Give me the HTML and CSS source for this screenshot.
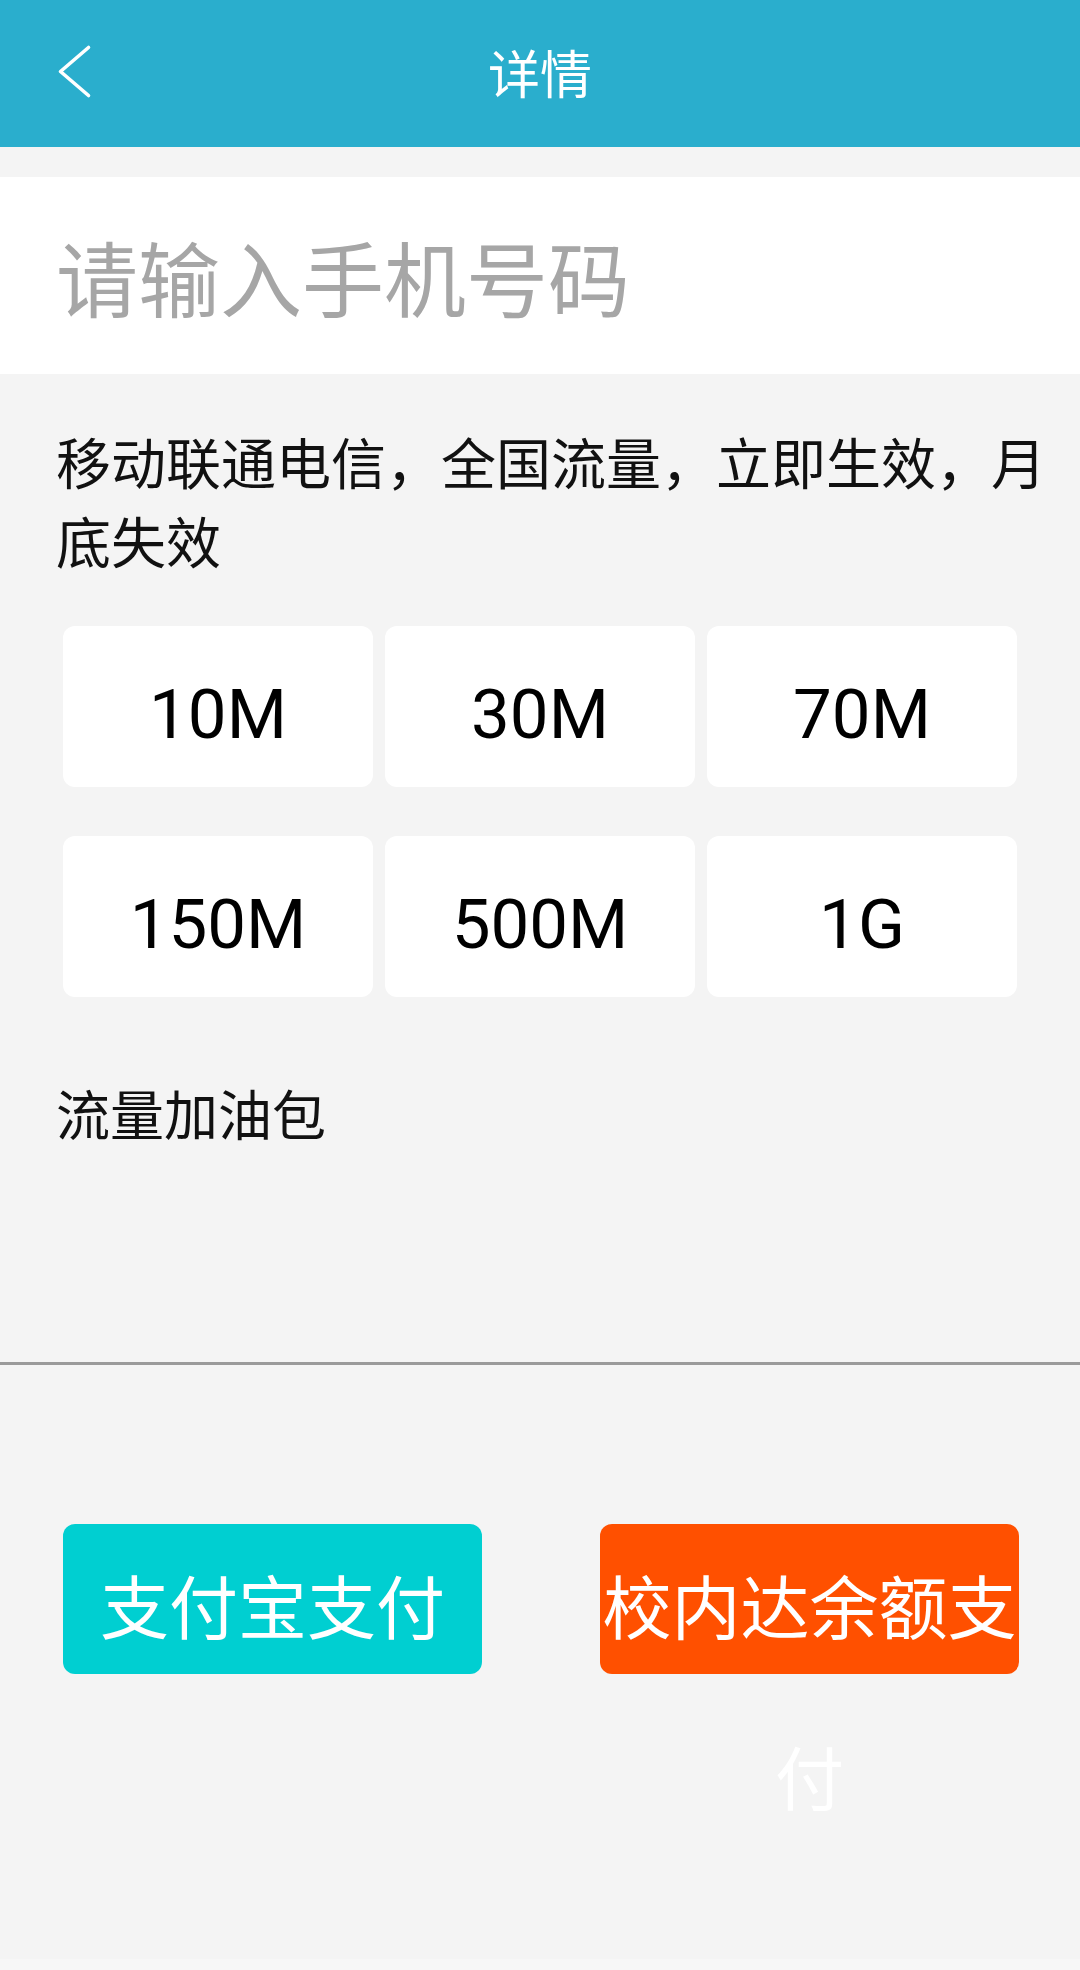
FILE: index.html
```html
<!DOCTYPE html>
<html lang="zh-CN">
<head>
<meta charset="utf-8">
<title>详情</title>
<link rel="stylesheet" href="styles.css">
</head>
<body>
<div class="page">
  <header class="topbar">
    <div class="topbar-left">
      <svg class="back-icon" width="40" height="60" viewBox="0 0 40 60" aria-hidden="true">
        <polyline points="33.5,5.5 5.5,29.5 33.5,53.5" fill="none" stroke="#ffffff" stroke-width="3.6" stroke-linecap="round" stroke-linejoin="round"/>
      </svg>
    </div>
    <div class="topbar-title">详情</div>
    <div class="topbar-right"></div>
  </header>

  <div class="phone-field">
    <span class="phone-placeholder">请输入手机号码</span>
  </div>

  <p class="desc">移动联通电信，全国流量，立即生效，月底失效</p>

  <div class="plans">
    <div class="plan">10M</div>
    <div class="plan">30M</div>
    <div class="plan">70M</div>
    <div class="plan">150M</div>
    <div class="plan">500M</div>
    <div class="plan">1G</div>
  </div>

  <div class="addon">
    <p class="addon-title">流量加油包</p>
    <div class="addon-list"></div>
  </div>

  <div class="pay-row">
    <div class="pay-btn pay-alipay"><span class="pay-text">支付宝支付</span></div>
    <div class="pay-btn pay-campus"><span class="pay-text">校内达余额支付</span></div>
  </div>
</div>
<div class="navstrip"></div>
</body>
</html>
```

FILE: styles.css
```css
html, body {
  margin: 0;
  padding: 0;
}

body {
  background: #f7f7f7;
  font-family: "Noto Sans CJK SC", "Noto Sans", sans-serif;
  color: #111111;
}

.page {
  height: 1959px;
  background: #f4f4f4;
  overflow: hidden;
}

.navstrip {
  height: 11px;
  background: #f7f7f7;
}

/* Top bar */
.topbar {
  height: 147px;
  background: #2aaecd;
  display: grid;
  grid-template-columns: 1fr auto 1fr;
  align-items: center;
}

.topbar-left {
  display: flex;
  align-items: center;
  padding-left: 55px;
  padding-bottom: 4px;
}

.back-icon {
  display: block;
}

.topbar-title {
  color: #ffffff;
  font-size: 52px;
  line-height: 60px;
  padding-bottom: 4px;
}

/* Phone input */
.phone-field {
  margin-top: 30px;
  height: 197px;
  background: #ffffff;
  display: flex;
  align-items: center;
  padding-left: 56px;
}

.phone-placeholder {
  color: #a6a6a6;
  font-size: 82px;
  line-height: 100px;
}

/* Description */
.desc {
  margin: 47px 10px 0 56px;
  font-size: 55px;
  line-height: 79px;
  color: #111111;
}

/* Plan grid */
.plans {
  margin: 47px 63px 0 63px;
  display: grid;
  grid-template-columns: repeat(3, 1fr);
  column-gap: 12px;
  row-gap: 49px;
}

.plan {
  height: 161px;
  background: #ffffff;
  border-radius: 12px;
  display: flex;
  align-items: center;
  justify-content: center;
  padding-top: 16px;
  box-sizing: border-box;
  font-family: Roboto, "Noto Sans", sans-serif;
  font-size: 69px;
  color: #000000;
}

/* Add-on section */
.addon {
  border-bottom: 3px solid #9a9a9a;
}

.addon-title {
  margin: 76px 0 0 56px;
  font-size: 54px;
  line-height: 79px;
  color: #111111;
}

.addon-list {
  height: 210px;
}

/* Payment buttons */
.pay-row {
  margin-top: 159px;
  padding: 0 61px 0 63px;
  display: flex;
  justify-content: space-between;
}

.pay-btn {
  width: 419px;
  height: 150px;
  border-radius: 12px;
  color: #ffffff;
  text-align: center;
  font-size: 69px;
  line-height: 171px;
}

.pay-text {
  display: block;
  margin-top: -5px;
}

.pay-alipay {
  background: #00cfd1;
}

.pay-campus {
  background: #ff5000;
}
```
